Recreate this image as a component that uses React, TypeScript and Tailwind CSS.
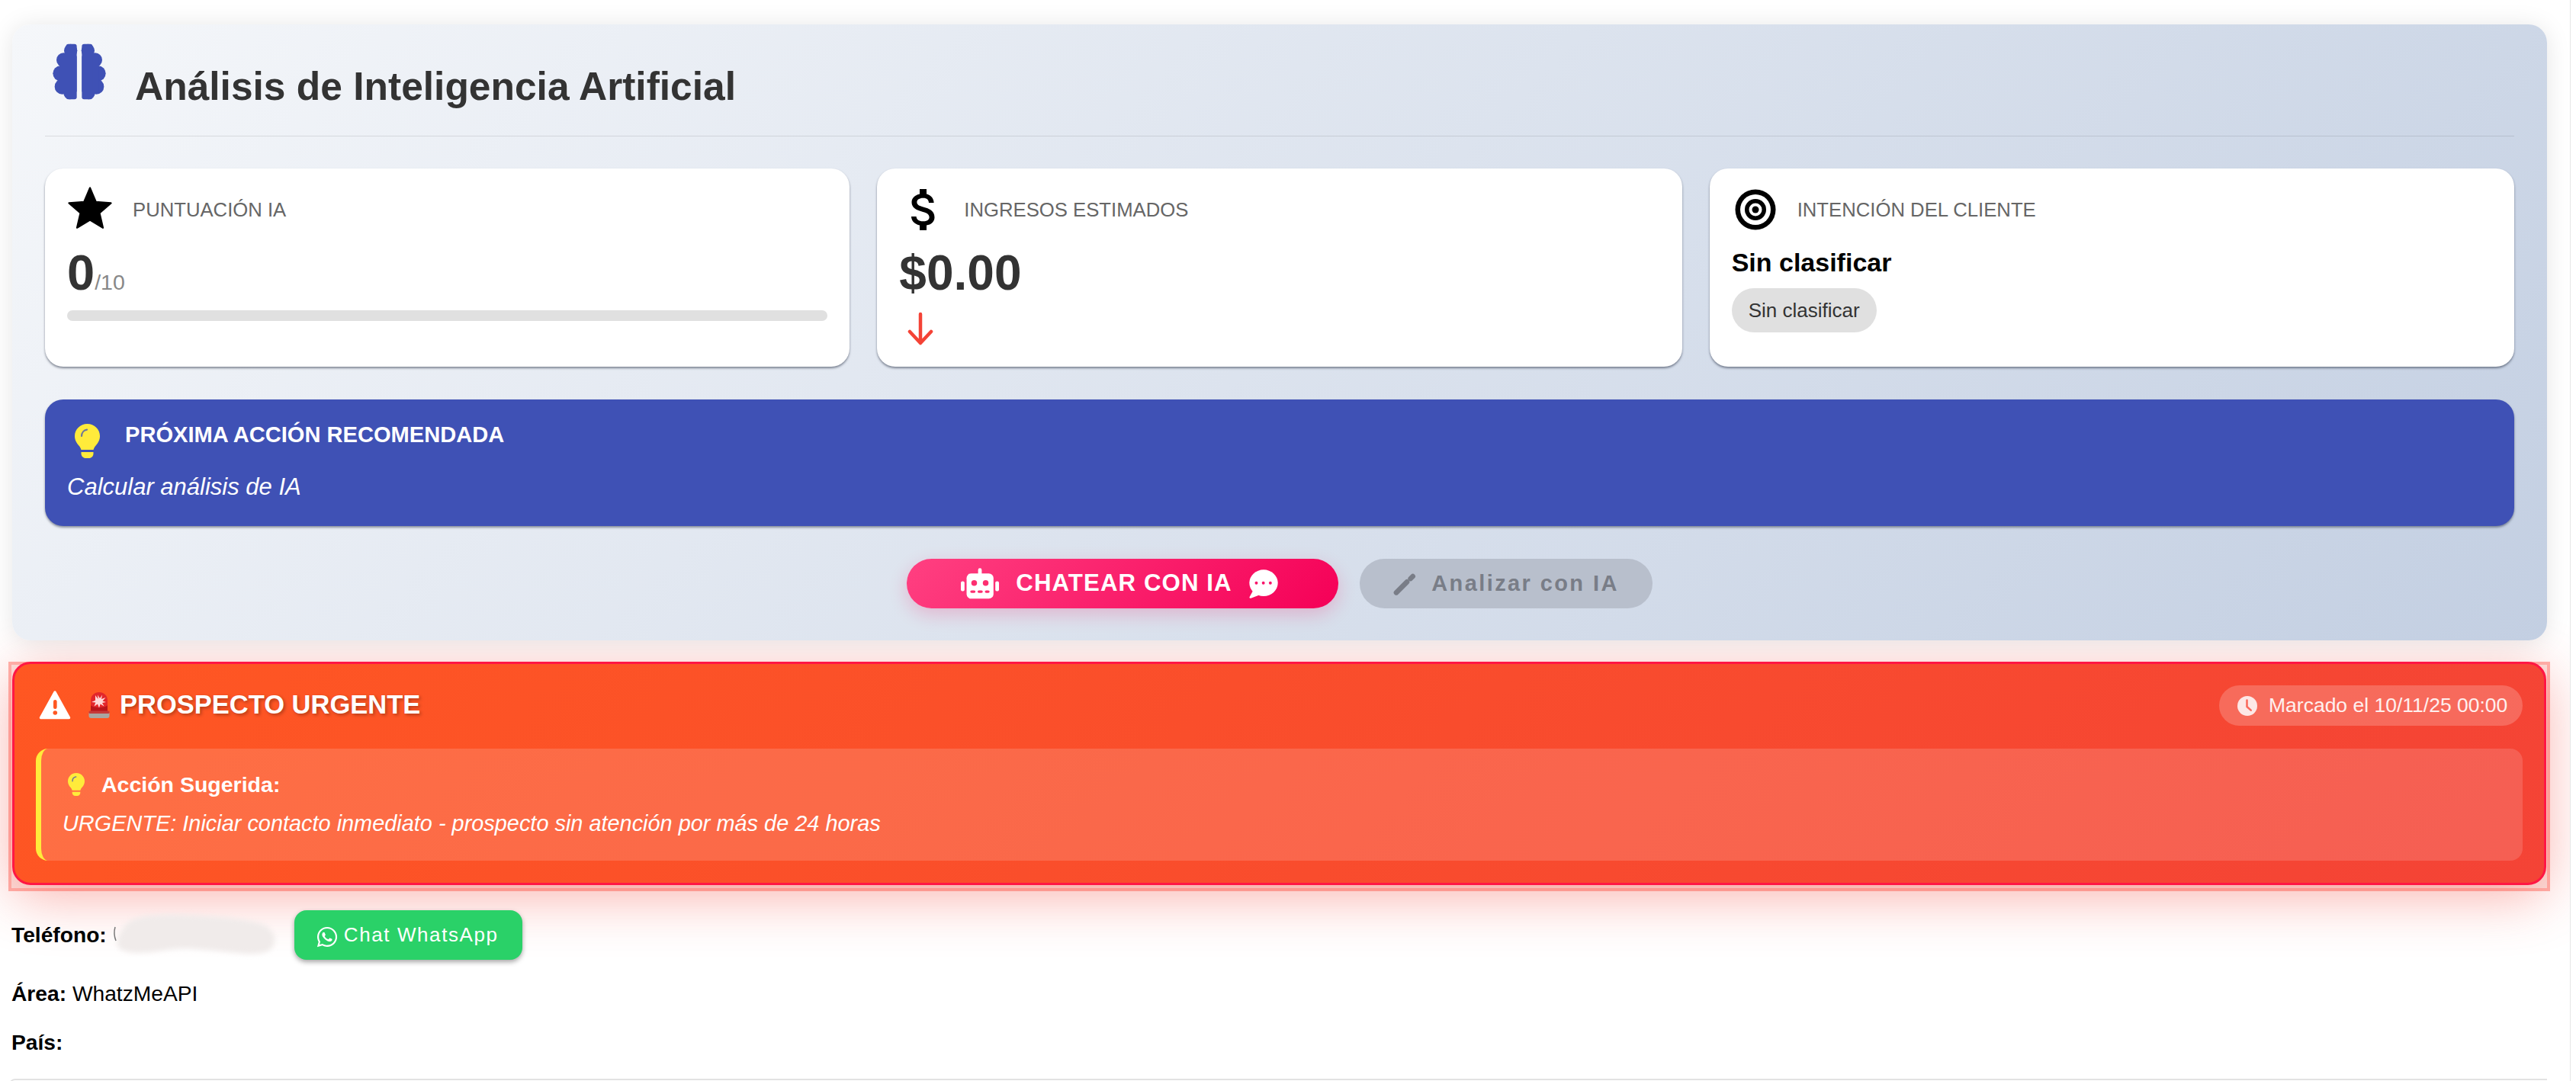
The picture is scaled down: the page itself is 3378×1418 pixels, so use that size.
import { FaWhatsapp } from "react-icons/fa";
import { MdAttachMoney } from "react-icons/md";

const BrainHalf = () => (
  <>
    <circle cx="128" cy="78" r="26" />
    <circle cx="100" cy="115" r="28" />
    <circle cx="88" cy="168" r="30" />
    <circle cx="95" cy="220" r="30" />
    <circle cx="125" cy="245" r="25" />
    <rect x="85" y="100" width="67" height="140" />
    <rect x="110" y="52" width="42" height="218" rx="9" />
  </>
);

const Brain = () => (
  <svg width="72" height="74" viewBox="54 50 216 222" fill="#3f51b5" className="shrink-0 ml-[9px]">
    <BrainHalf />
    <g transform="matrix(-1 0 0 1 324 0)">
      <BrainHalf />
    </g>
  </svg>
);

const Star = () => (
  <svg width="66" height="66" viewBox="0 0 24 24" className="shrink-0 -mt-[2px]">
    <path
      d="M12 17.27 18.18 21l-1.64-7.03L22 9.24l-7.19-.61L12 2 9.19 8.63 2 9.24l5.46 4.73L5.82 21z"
      fill="#000"
      stroke="#000"
      strokeWidth="0.8"
      strokeLinejoin="round"
    />
  </svg>
);

const Target = () => (
  <svg width="54" height="54" viewBox="0 0 54 54" className="shrink-0">
    <circle cx="27" cy="27" r="26.5" fill="#000" />
    <circle cx="27" cy="27" r="20" fill="#fff" />
    <circle cx="27" cy="27" r="14" fill="#000" />
    <circle cx="27" cy="27" r="8.5" fill="#fff" />
    <circle cx="27" cy="27" r="4.5" fill="#000" />
  </svg>
);

const ArrowDown = () => (
  <svg width="34" height="44" viewBox="0 0 34 44" fill="none" stroke="#f44336" strokeWidth="4.5" strokeLinecap="round" strokeLinejoin="round">
    <path d="M17 3v37M3 26l14 15 14-15" />
  </svg>
);

const Bulb = ({ w, h }: { w: number; h: number }) => (
  <svg width={w} height={h} viewBox="0 0 33 45" className="shrink-0">
    <path
      d="M16.5 0C7.4 0 0 7 0 16c0 5.4 2.6 9.2 5.4 12.6 1.5 1.8 2.6 3.6 3 5.4h16.2c.4-1.8 1.5-3.6 3-5.4C30.4 25.2 33 21.4 33 16 33 7 25.6 0 16.5 0z"
      fill="#ffeb3b"
    />
    <path d="M8.5 37h16v2c0 3.4-2.6 6-6 6h-4c-3.4 0-6-2.6-6-6z" fill="#ffeb3b" />
    <path d="M9 16c0-4.4 3-7.8 7-8.4" fill="none" stroke="#3f51b5" strokeOpacity="0.75" strokeWidth="2.2" strokeLinecap="round" />
  </svg>
);

const Robot = () => (
  <svg width="50" height="41" viewBox="240 68 146 118" className="shrink-0">
    <rect x="262" y="88" width="103" height="97" rx="18" fill="#fff" />
    <rect x="306" y="68" width="14" height="30" rx="7" fill="#fff" />
    <rect x="240" y="118" width="14" height="38" rx="6" fill="#fff" />
    <rect x="372" y="118" width="14" height="38" rx="6" fill="#fff" />
    <circle cx="291" cy="125" r="11" fill="#fd2e70" />
    <circle cx="335" cy="125" r="11" fill="#fd2e70" />
    <rect x="276" y="153" width="20" height="10" rx="5" fill="#fd2e70" />
    <rect x="304" y="153" width="20" height="10" rx="5" fill="#fd2e70" />
    <rect x="332" y="153" width="18" height="10" rx="5" fill="#fd2e70" />
  </svg>
);

const ChatBubble = () => (
  <svg width="38" height="38" viewBox="1376 64 116 116" className="shrink-0">
    <ellipse cx="1434" cy="118" rx="57" ry="53" fill="#fff" />
    <path d="M1392 148l-14 26c-2 4 1 6 5 5l32-12z" fill="#fff" />
    <circle cx="1405" cy="118" r="6" fill="#f8146a" />
    <circle cx="1433" cy="118" r="6" fill="#f8146a" />
    <circle cx="1461" cy="118" r="6" fill="#f8146a" />
  </svg>
);

const Pencil = () => (
  <svg width="30" height="30" viewBox="175 88 90 90" fill="none" stroke="#797d87" strokeWidth="20" className="shrink-0">
    <path d="M187 167l42-42" strokeLinecap="round" />
    <path d="M243 112l9-9" strokeLinecap="round" />
  </svg>
);

const Warning = () => (
  <svg width="42" height="40" viewBox="0 0 42 40" className="shrink-0">
    <path d="M21 3 2.5 36.5h37z" fill="#fff" stroke="#fff" strokeWidth="3.5" strokeLinejoin="round" />
    <rect x="19" y="13" width="4.6" height="12" rx="2.3" fill="#ff5722" />
    <circle cx="21.3" cy="30" r="2.8" fill="#ff5722" />
  </svg>
);

const Siren = () => (
  <svg width="28" height="34" viewBox="0 0 28 34" className="shrink-0">
    <path d="M3 25V11C3 4 8 0 14 0s11 4 11 11v14z" fill="#e3262a" />
    <path d="M3 25v-8c2 4 20 4 22 0v8z" fill="#b9151b" />
    <path d="M9 4l3.6 5L12 3.5l3 4.5 3-4.5-1 5.5 5.5-2-4 4.5 4.5 1.5-5 1 2.6 4.5-5-3-1.6 5-2-5-4.5 3 1.8-5-5.3-.5 5-2.3z" fill="#ffd9d9" />
    <rect x="0.5" y="25" width="27" height="9" rx="3" fill="#a9a6a2" />
    <rect x="0.5" y="24.5" width="27" height="3.5" rx="1.5" fill="#c63a3a" />
  </svg>
);

const Clock = () => (
  <svg width="26" height="26" viewBox="0 0 26 26" className="shrink-0">
    <circle cx="13" cy="13" r="13" fill="#fde8e6" />
    <path d="M12.5 5.5V14l5.2 4.6" fill="none" stroke="#fa6a5d" strokeWidth="2.6" strokeLinecap="round" strokeLinejoin="round" />
  </svg>
);

// mancha que tapa el numero de telefono
const Smudge = () => (
  <svg width="230" height="70" viewBox="0 0 230 70" className="shrink-0 -my-4 -mr-[6px] ml-[3px]">
    <path
      d="M16 30C24 10 50 7 95 8c45 1 80 5 102 11 16 5 23 16 19 28-4 12-22 14-50 11-34-4-62-7-82-5-25 3-50 9-68 1C8 49 10 40 16 30z"
      fill="#f0ebea"
      className="blur-[3px]"
    />
    <path d="M8 24c-2 7-1 13 1 18" stroke="#777" strokeWidth="1.5" fill="none" />
  </svg>
);

const cardClass =
  "flex-1 h-[260px] bg-white rounded-[24px] px-[29px] pt-[26px] shadow-[0_2px_3px_rgba(40,50,70,0.55)]";

export default function App() {
  return (
    <div className="w-[3371px] h-[1418px] bg-white border-r border-[#e6e6e6] overflow-hidden font-['Liberation_Sans',Arial,sans-serif]">
      <div className="pt-[32px] pl-[16px] pr-[30px]">
        {/* panel IA */}
        <section className="relative z-10 h-[808px] rounded-[24px] px-[43px] pt-[25px] bg-[linear-gradient(135deg,#f5f7fa_0%,#c3cfe2_100%)] shadow-[0_2px_32px_rgba(0,0,0,0.1)]">
          <div className="flex items-start gap-[37px] h-[122px] border-b border-black/10">
            <Brain />
            <h2 className="mt-[27px] text-[51.5px] leading-[58px] font-bold text-[#333]">
              Análisis de Inteligencia Artificial
            </h2>
          </div>

          <div className="flex gap-[36px] mt-[42px]">
            <div className={cardClass}>
              <div className="flex items-center gap-[23px] -ml-[3px] h-[56px]">
                <Star />
                <span className="text-[25.7px] text-[#666] uppercase">Puntuación IA</span>
              </div>
              <div className="mt-[21px] flex items-baseline text-[#333] leading-[68px]">
                <span className="text-[65px] font-bold">0</span>
                <span className="text-[28.5px] text-[#888]">/10</span>
              </div>
              <div className="mt-[3px] h-[14px] rounded-[7px] bg-[#e0e0e0]" />
            </div>

            <div className={cardClass}>
              <div className="flex items-center gap-[24px] h-[56px]">
                <MdAttachMoney size={72} className="-ml-[3px] -mr-[8px] text-black" />
                <span className="text-[25.7px] text-[#666] uppercase">Ingresos estimados</span>
              </div>
              <div className="mt-[21px] text-[64px] leading-[68px] font-bold text-[#333]">$0.00</div>
              <div className="mt-[17px] ml-[11px]">
                <ArrowDown />
              </div>
            </div>

            <div className={cardClass}>
              <div className="flex items-center gap-[28px] h-[56px]">
                <span className="ml-[4px]">
                  <Target />
                </span>
                <span className="text-[25.7px] text-[#666] uppercase">Intención del cliente</span>
              </div>
              <div className="mt-[21px] text-[34px] leading-[40px] font-bold text-black">Sin clasificar</div>
              <span className="inline-block mt-[14px] h-[58px] leading-[58px] px-[22px] rounded-full bg-[#e0e0e0] text-[26px] text-[#333]">
                Sin clasificar
              </span>
            </div>
          </div>

          <div className="mt-[43px] h-[166px] rounded-[24px] bg-[#3f51b5] text-white px-[29px] pt-[32px] shadow-[0_2px_3px_rgba(40,50,70,0.5)]">
            <div className="flex items-start gap-[33px] pl-[10px] h-[45px]">
              <Bulb w={33} h={45} />
              <span className="text-[29.1px] leading-[28px] font-bold uppercase">Próxima acción recomendada</span>
            </div>
            <p className="mt-[18px] text-[31px] leading-[40px] italic">Calcular análisis de IA</p>
          </div>

          <div className="mt-[43px] flex justify-center gap-[28px]">
            <button className="w-[566px] h-[65px] rounded-full flex items-center justify-center gap-[22px] pr-[8px] text-white text-[31.2px] font-bold tracking-[1.1px] bg-[linear-gradient(135deg,#ff4081,#f50057)] shadow-[0_8px_24px_rgba(245,0,87,0.2)]">
              <Robot />
              <span>CHATEAR CON IA</span>
              <ChatBubble />
            </button>
            <button className="w-[384px] h-[65px] rounded-full flex items-center justify-center gap-[20px] bg-[#b8bfcc] text-[#797d87] text-[29px] font-bold tracking-[2.4px]">
              <Pencil />
              <span>Analizar con IA</span>
            </button>
          </div>
        </section>

        {/* alerta urgente */}
        <section className="mt-[28px] -ml-[5px] -mr-[4px] h-[301px] border-4 border-[#ffb4ae] bg-[#fbe5e2]">
          <div className="-mt-[4px] mx-[1px] h-[293px] rounded-[24px] border-[3px] border-[#ff1744] bg-[linear-gradient(135deg,#ff5722,#f44336)] shadow-[0_14px_72px_rgba(244,67,54,0.42)] px-[28px] pt-[32px] text-white">
            <div className="flex items-start h-[53px]">
              <div className="ml-[4px] flex items-center gap-[23px] h-[40px] mt-[2px]">
                <Warning />
                <div className="flex items-center gap-[13px]">
                  <Siren />
                  <span className="text-[34.5px] font-bold [text-shadow:2px_2px_4px_rgba(0,0,0,0.3)]">
                    PROSPECTO URGENTE
                  </span>
                </div>
              </div>
              <div className="ml-auto -mt-[4px] h-[53px] w-[398px] rounded-full bg-white/20 flex items-center gap-[15px] pl-[24px] text-[26.5px] text-white/90">
                <Clock />
                <span>Marcado el 10/11/25 00:00</span>
              </div>
            </div>

            <div className="mt-[26px] h-[147px] rounded-[16px] border-l-[7px] border-[#ffeb3b] bg-white/15 pl-[28px] pt-[32px]">
              <div className="flex items-center gap-[22px] h-[30px] pl-[7px]">
                <Bulb w={22} h={30} />
                <span className="text-[28.5px] font-bold">Acción Sugerida:</span>
              </div>
              <p className="mt-[18px] text-[28.9px] leading-[36px] italic">
                URGENTE: Iniciar contacto inmediato - prospecto sin atención por más de 24 horas
              </p>
            </div>
          </div>
        </section>

        {/* datos de contacto */}
        <div className="mt-[25px] -ml-[1px] relative text-[28.2px] text-black">
          <div className="flex items-center h-[65px]">
            <strong className="font-bold">Teléfono:</strong>
            <Smudge />
            <button className="ml-[19px] w-[299px] h-[65px] rounded-[16px] bg-[#2ad168] flex items-center gap-[7px] pl-[28px] text-white text-[26px] tracking-[1.6px] shadow-[0_3px_6px_rgba(0,0,0,0.35)]">
              <FaWhatsapp size={30} className="mt-[4px] shrink-0" />
              <span>Chat WhatsApp</span>
            </button>
          </div>
          <p className="mt-[27px] leading-[34px]">
            <strong className="font-bold">Área:</strong> WhatzMeAPI
          </p>
          <p className="mt-[30px] leading-[34px]">
            <strong className="font-bold">País:</strong>
          </p>
          <div className="mt-[31px] -ml-[3px] h-[8px] rounded-tl-[8px] border-t-2 border-l border-[#e2e2e2]" />
        </div>
      </div>
    </div>
  );
}
